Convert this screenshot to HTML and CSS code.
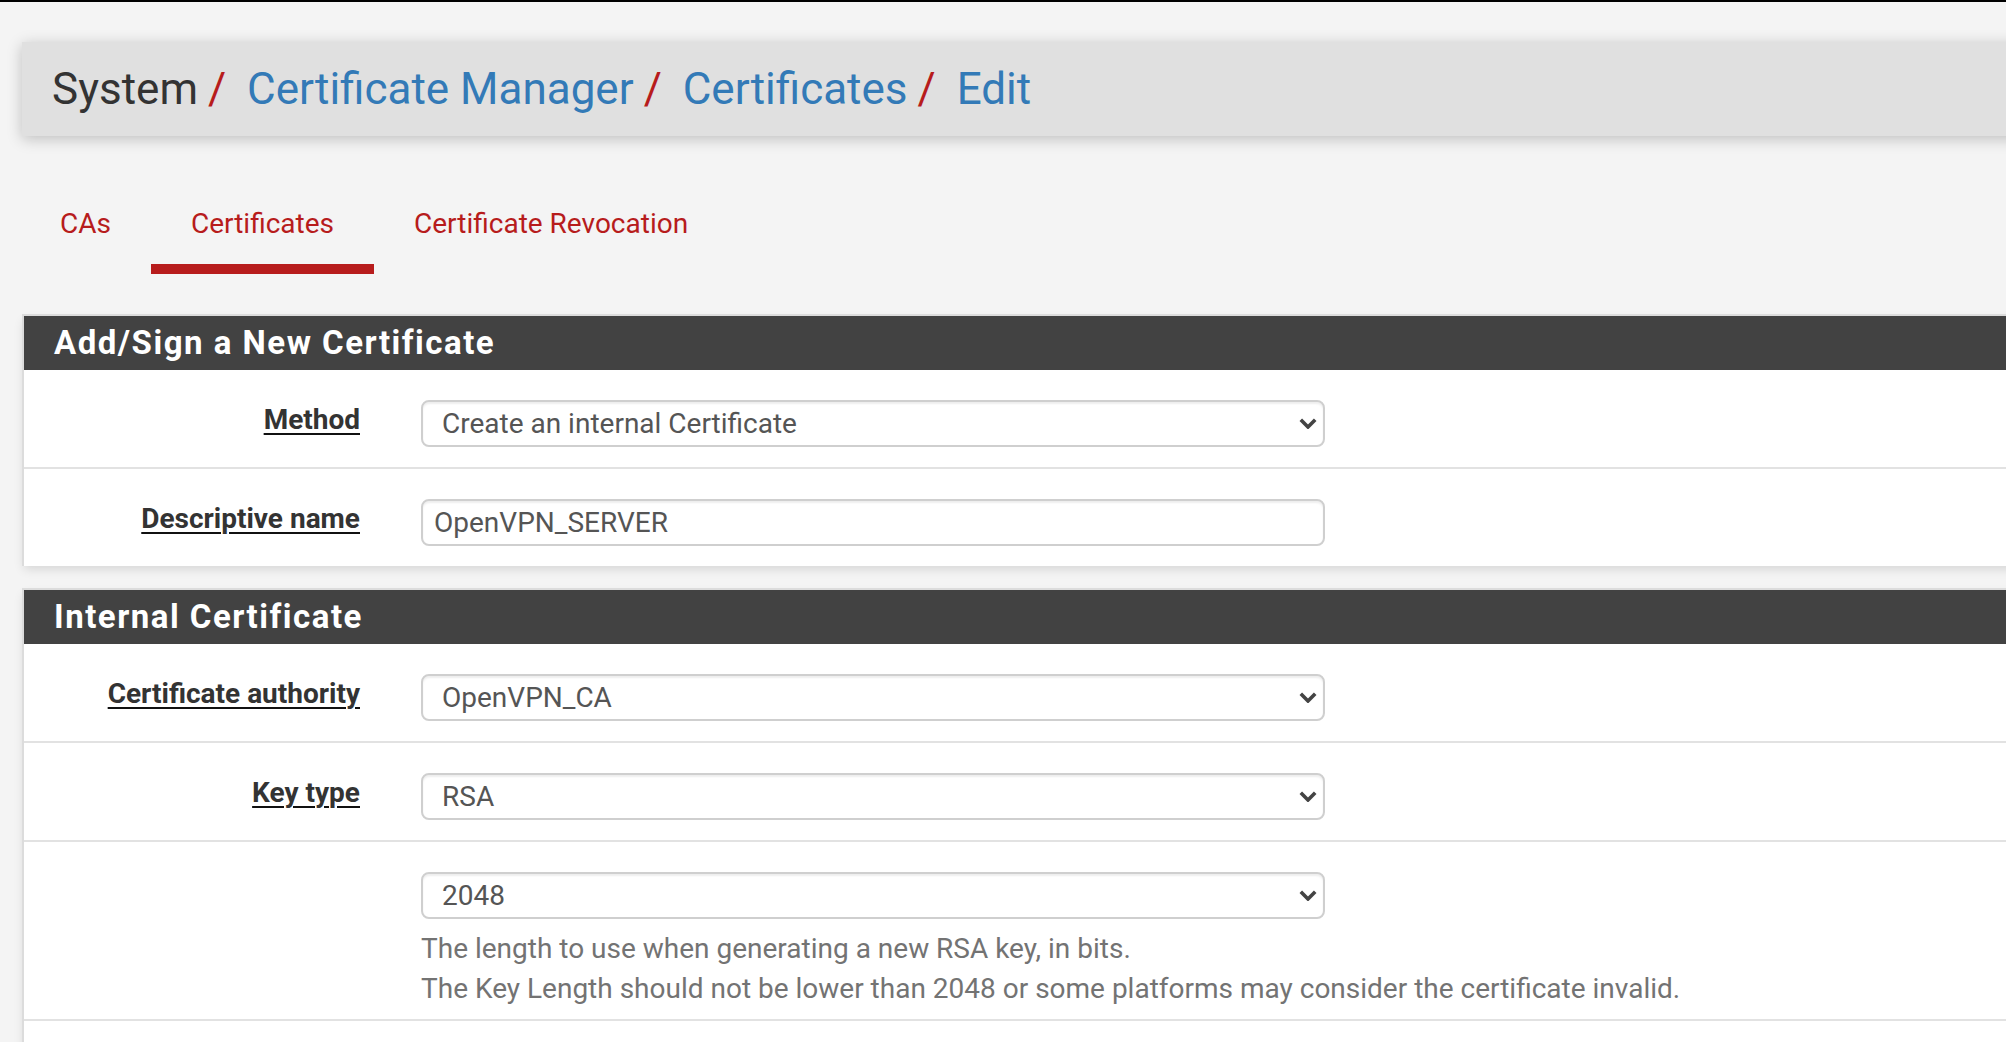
FILE: index.html
```html
<!DOCTYPE html>
<html lang="en">
<head>
<meta charset="utf-8">
<title>System / Certificate Manager / Certificates / Edit</title>
<link rel="stylesheet" href="styles.css">
</head>
<body>
<div class="topbar"></div>
<div class="page">
  <header class="crumbs">
    <span class="crumb crumb-plain">System</span><span class="sep">/&nbsp;</span><a class="crumb" href="#">Certificate Manager</a><span class="sep">/&nbsp;</span><a class="crumb" href="#">Certificates</a><span class="sep">/&nbsp;</span><a class="crumb" href="#">Edit</a>
  </header>

  <nav class="tabs">
    <a class="tab" href="#">CAs</a>
    <a class="tab tab-active" href="#">Certificates</a>
    <a class="tab" href="#">Certificate Revocation</a>
  </nav>

  <section class="panel">
    <h2 class="panel-title">Add/Sign a New Certificate</h2>
    <div class="row">
      <div class="label"><span>Method</span></div>
      <div class="field">
        <div class="select"><span>Create an internal Certificate</span><svg class="chev" viewBox="0 0 18 11" width="18" height="11"><polyline points="1.8,1.8 9,9 16.2,1.8"/></svg></div>
      </div>
    </div>
    <div class="row row-last">
      <div class="label"><span>Descriptive name</span></div>
      <div class="field">
        <div class="input">OpenVPN_SERVER</div>
      </div>
    </div>
  </section>

  <section class="panel">
    <h2 class="panel-title">Internal Certificate</h2>
    <div class="row">
      <div class="label"><span>Certificate authority</span></div>
      <div class="field">
        <div class="select"><span>OpenVPN_CA</span><svg class="chev" viewBox="0 0 18 11" width="18" height="11"><polyline points="1.8,1.8 9,9 16.2,1.8"/></svg></div>
      </div>
    </div>
    <div class="row">
      <div class="label"><span>Key type</span></div>
      <div class="field">
        <div class="select"><span>RSA</span><svg class="chev" viewBox="0 0 18 11" width="18" height="11"><polyline points="1.8,1.8 9,9 16.2,1.8"/></svg></div>
      </div>
    </div>
    <div class="row row-help">
      <div class="label"></div>
      <div class="field">
        <div class="select"><span>2048</span><svg class="chev" viewBox="0 0 18 11" width="18" height="11"><polyline points="1.8,1.8 9,9 16.2,1.8"/></svg></div>
        <p class="help">The length to use when generating a new RSA key, in bits.<br>The Key Length should not be lower than 2048 or some platforms may consider the certificate invalid.</p>
      </div>
    </div>
    <div class="row row-empty"></div>
  </section>
</div>
</body>
</html>
```

FILE: styles.css
```css
html, body {
  margin: 0;
  padding: 0;
  overflow: hidden;
  height: 100%;
}

body {
  background: #f4f4f4;
  font-family: Roboto, "Liberation Sans", Arial, sans-serif;
  font-size: 28px;
  line-height: 40px;
  color: #333;
}

.topbar {
  height: 2px;
  background: #000;
}

.page {
  width: 2300px;
  padding: 40px 0 0 22px;
}

/* breadcrumb header */
.crumbs {
  background: #e0e0e0;
  padding: 21px 30px;
  font-size: 44px;
  line-height: 52px;
  white-space: nowrap;
  box-shadow: 0 3px 14px rgba(0, 0, 0, 0.22);
}

.crumb {
  color: #337ab7;
  text-decoration: none;
}

.crumb-plain {
  color: #333;
}

.sep {
  color: #b71c1c;
  margin: 0 10px;
}

/* tabs */
.tabs {
  display: flex;
  margin: 48px 0 0 -2px;
}

.tab {
  display: block;
  padding: 20px 40px;
  color: #b71c1c;
  text-decoration: none;
  border-bottom: 10px solid transparent;
  white-space: nowrap;
}

.tab-active {
  border-bottom-color: #b71c1c;
}

/* panels */
.panel {
  margin-top: 40px;
  background: #fff;
  border-top: 2px solid #dcdcdc;
  border-left: 2px solid #dcdcdc;
  box-shadow: 0 5px 10px -2px rgba(0, 0, 0, 0.13);
}

.panel + .panel {
  margin-top: 22px;
}

.panel-title {
  margin: 0;
  background: #424242;
  color: #fff;
  font-size: 33px;
  font-weight: 700;
  letter-spacing: 1.5px;
  line-height: 54px;
  padding-left: 30px;
}

.row {
  display: grid;
  grid-template-columns: 336px 1fr;
  column-gap: 61px;
  padding: 30px 0 20px;
  border-bottom: 2px solid #e2e2e2;
}

.row-last {
  border-bottom: none;
}

.row-help {
  padding-bottom: 10px;
}

.row-empty {
  height: 60px;
  border-bottom: none;
}

.label {
  text-align: right;
  font-size: 28px;
  font-weight: 700;
  line-height: 40px;
  color: #333;
}

.label span {
  text-decoration: underline;
  text-decoration-thickness: 2px;
  text-underline-offset: 4px;
  text-decoration-color: #111;
}

.field {
  min-width: 0;
}

.select,
.input {
  box-sizing: border-box;
  width: 904px;
  height: 47px;
  border: 2px solid #cfcfcf;
  border-radius: 8px;
  background: #fff;
  box-shadow: inset 0 2px 2px rgba(0, 0, 0, 0.07);
  color: #555;
  line-height: 43px;
  white-space: nowrap;
}

.select {
  display: flex;
  align-items: center;
  justify-content: space-between;
  padding: 0 6px 0 19px;
}

.input {
  padding: 0 11px;
}

.chev {
  display: block;
  fill: none;
  stroke: #444;
  stroke-width: 3.6;
}

.help {
  margin: 10px 0 0;
  color: #737373;
  white-space: nowrap;
}
```
